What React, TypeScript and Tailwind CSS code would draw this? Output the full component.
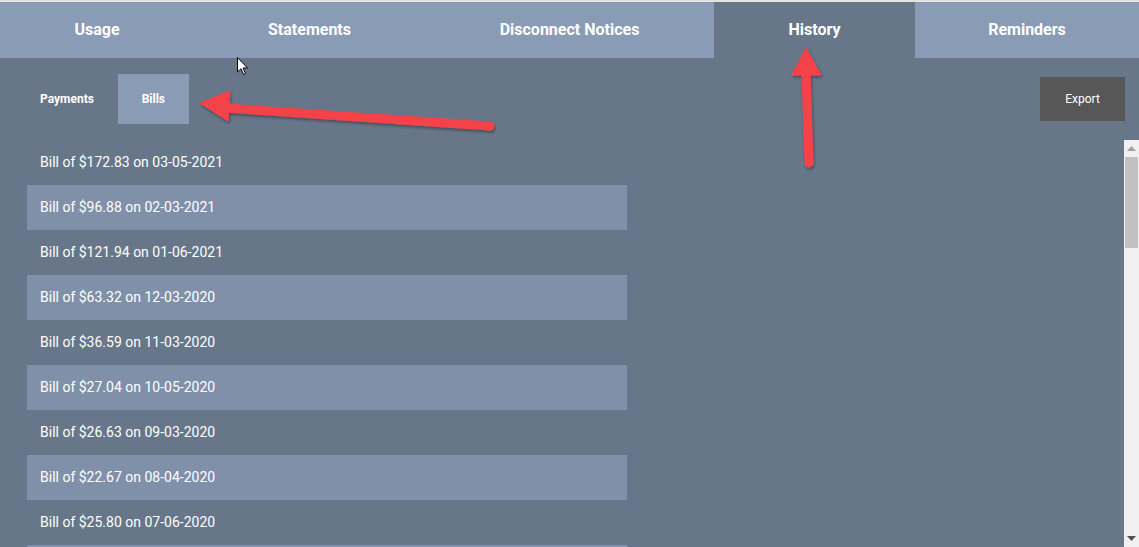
import React from 'react';

const tabs = [
  { label: 'Usage', w: 'w-[194px]' },
  { label: 'Statements', w: 'w-[231px]' },
  { label: 'Disconnect Notices', w: 'w-[289px]' },
  { label: 'History', w: 'w-[201px]', active: true },
  { label: 'Reminders', w: 'flex-1' },
];

const bills = [
  ['172.83', '03-05-2021'],
  ['96.88', '02-03-2021'],
  ['121.94', '01-06-2021'],
  ['63.32', '12-03-2020'],
  ['36.59', '11-03-2020'],
  ['27.04', '10-05-2020'],
  ['26.63', '09-03-2020'],
  ['22.67', '08-04-2020'],
  ['25.80', '07-06-2020'],
];

export default function App() {
  return (
    <div
      className="relative w-[1139px] h-[547px] overflow-hidden bg-[#687689] border-t-2 border-[#e4e4e4] text-white"
      style={{ fontFamily: 'Roboto, "Liberation Sans", sans-serif' }}
    >
      <div className="flex h-[56px]">
        {tabs.map(t => (
          <div
            key={t.label}
            className={`${t.w} flex items-center justify-center text-base font-bold ${t.active ? 'bg-[#687689]' : 'bg-[#8a9bb6]'}`}
          >
            {t.label}
          </div>
        ))}
      </div>

      <div className="flex items-center justify-between pl-[17px] pr-[14px] h-[82px]">
        <div className="flex items-center h-[50px]">
          <button className="h-full pl-[23px] pr-[24px] text-xs font-bold">Payments</button>
          <button className="h-full w-[71px] bg-[#8a9bb6] text-xs font-bold">Bills</button>
        </div>
        <button className="w-[85px] h-[44px] bg-[#575757] text-xs">Export</button>
      </div>

      <div className="flex">
        <div className="flex-1 pl-[27px]">
          {bills.map(([amt, date], i) => (
            <div
              key={date}
              className={`w-[600px] h-[45px] flex items-center pl-[13px] pb-[1px] text-sm ${i % 2 === 1 ? 'bg-[#8190a9]' : ''}`}
            >
              Bill of ${amt} on {date}
            </div>
          ))}
          <div className="w-[600px] h-[45px] bg-[#8190a9]" />
        </div>
        <div className="w-[15px] h-[407px] bg-[#f1f1f1] flex flex-col items-center">
          <div className="h-[17px] flex items-center justify-center">
            <svg width="9" height="5" viewBox="0 0 9 5"><path d="M0 5 L4.5 0 L9 5 Z" fill="#a3a3a3" /></svg>
          </div>
          <div className="w-[13px] h-[91px] bg-[#c1c1c1]" />
          <div className="flex-1" />
          <div className="h-[17px] flex items-center justify-center">
            <svg width="9" height="5" viewBox="0 0 9 5"><path d="M0 0 L9 0 L4.5 5 Z" fill="#505050" /></svg>
          </div>
        </div>
      </div>

      <svg className="absolute left-0 top-0 pointer-events-none" width="1139" height="547" viewBox="0 0 1139 547">
        <defs>
          <filter id="sh" x="-10%" y="-10%" width="120%" height="140%">
            <feDropShadow dx="1" dy="2" stdDeviation="1.5" floodColor="#000" floodOpacity="0.35" />
          </filter>
        </defs>
        <g filter="url(#sh)" fill="#f5424a" stroke="#f5424a">
          <line x1="226" y1="106" x2="490" y2="124" strokeWidth="9" strokeLinecap="round" />
          <path d="M200 101 L230 89 L228 119 Z" strokeWidth="1" strokeLinejoin="round" />
          <line x1="806" y1="70" x2="809" y2="161" strokeWidth="9" strokeLinecap="round" />
          <path d="M806 46 L821 73 L792 73 Z" strokeWidth="1" strokeLinejoin="round" />
        </g>
        <path
          d="M237.5 55.5 L237.5 70 L241 66.8 L243.5 72.5 L245.5 71.6 L243 66 L247.5 66 Z"
          fill="#fff"
          stroke="#000"
          strokeWidth="1"
          strokeLinejoin="round"
        />
      </svg>
    </div>
  );
}
